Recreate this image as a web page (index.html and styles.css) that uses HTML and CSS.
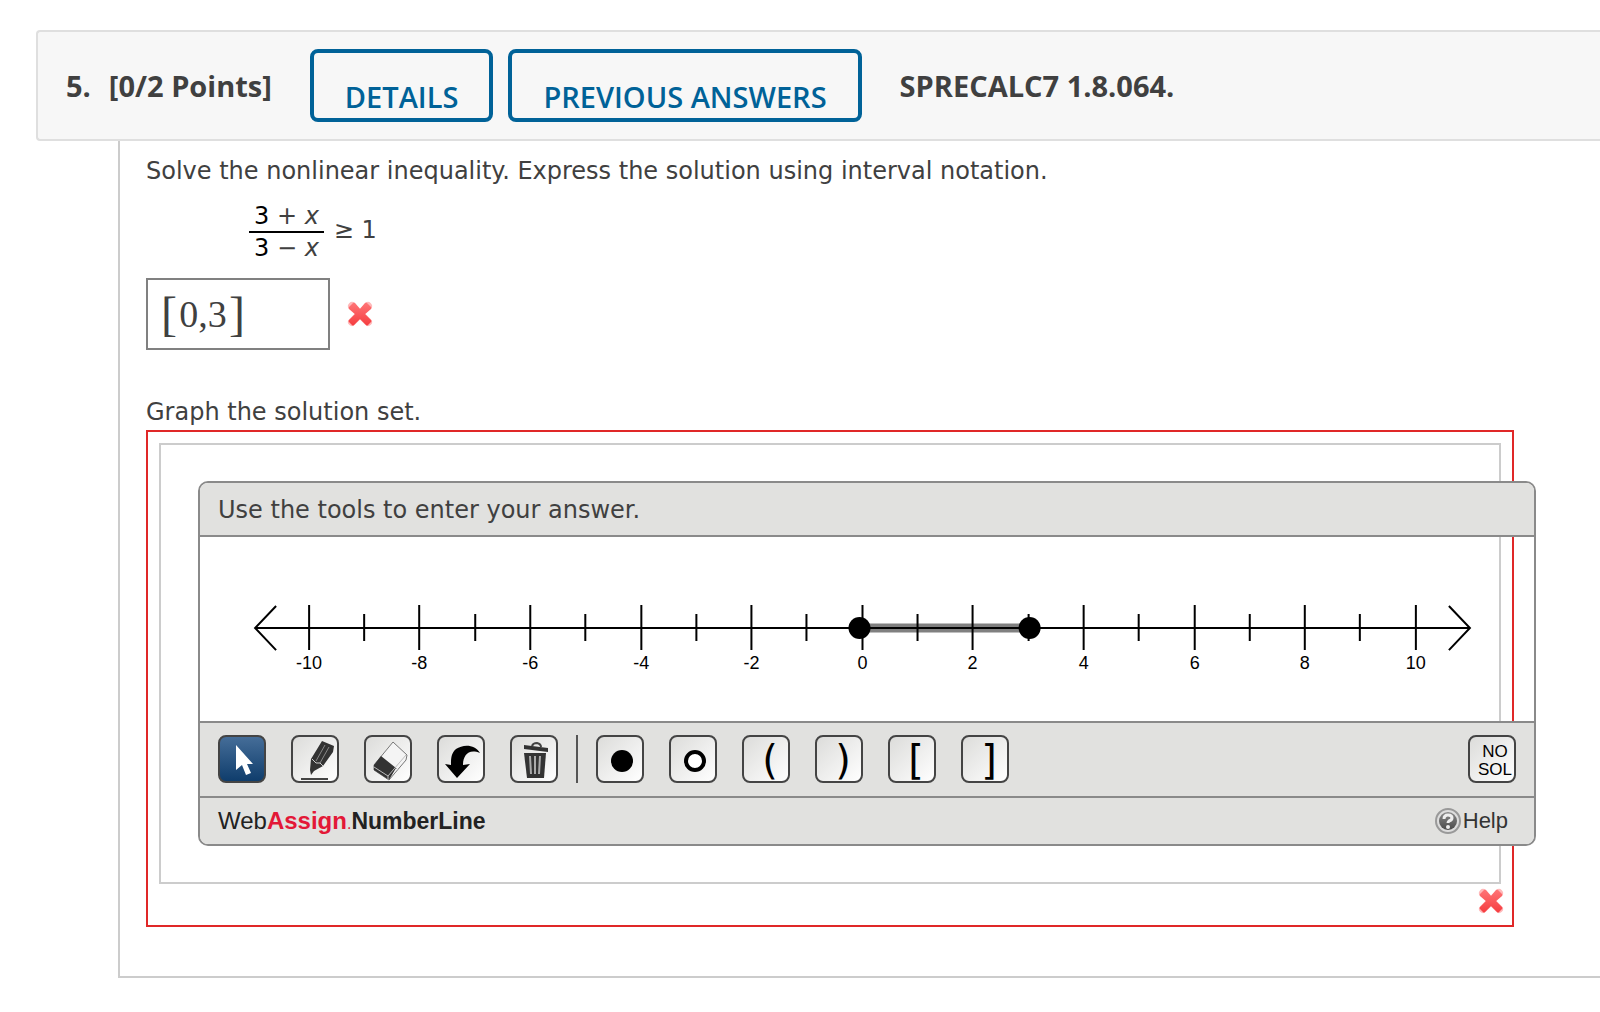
FILE: index.html
```
<!DOCTYPE html>
<html lang="en">
<head>
  <meta charset="UTF-8">
  <title>SPRECALC7 1.8.064.</title>
  <link rel="stylesheet" href="styles.css">
</head>
<body>
  <svg class="defs" width="0" height="0" aria-hidden="true">
    <defs>
      <linearGradient id="redFill" x1="0" y1="0" x2="0" y2="1">
        <stop offset="0" stop-color="#ff7577"/>
        <stop offset="1" stop-color="#f53d40"/>
      </linearGradient>
      <linearGradient id="helpFill" x1="0" y1="0" x2="0" y2="1">
        <stop offset="0" stop-color="#8a8a8a"/>
        <stop offset="1" stop-color="#4a4a4a"/>
      </linearGradient>
      <symbol id="wrong" viewBox="0 0 26 26">
        <path d="M5 5L21 21M21 5L5 21" fill="none" stroke="#ffb9ba" stroke-width="8" stroke-linecap="round"/>
        <path d="M2 6L6 2Q7 1 8 2L13 8L18 2Q19 1 20 2L24 6Q25 7 24 8L18 13L24 19Q25 20 24 21L21 24Q20 25 19 24L13 18L7 24Q6 25 5 24L2 21Q1 20 2 19L8 13L2 8Q1 7 2 6Z" fill="url(#redFill)"/>
      </symbol>
    </defs>
  </svg>

  <header class="question-header">
    <h2 class="points"><span class="number">5.</span>[0/2 Points]</h2>
    <div class="actions">
      <button class="action-btn" type="button">DETAILS</button>
      <button class="action-btn" type="button">PREVIOUS ANSWERS</button>
    </div>
    <strong class="code">SPRECALC7 1.8.064.</strong>
  </header>

  <main class="question">
    <p class="prompt">Solve the nonlinear inequality. Express the solution using interval notation.</p>
    <div class="math">
      <div class="fraction">
        <span class="numerator"><b>3</b> + <i>x</i></span>
        <span class="denominator"><b>3</b> − <i>x</i></span>
      </div>
      <span class="relation">≥ 1</span>
    </div>

    <div class="answer">
      <label class="answer-box">
        <span class="bracket">[</span>
        <input class="answer-input" type="text" value="0,3" size="3" aria-label="Interval">
        <span class="bracket">]</span>
      </label>
      <svg class="mark" role="img" aria-label="Incorrect"><use href="#wrong"/></svg>
    </div>

    <p class="prompt graph-prompt">Graph the solution set.</p>
    <section class="graded">
      <div class="frame">
        <div class="numberline">
          <div class="instructions">Use the tools to enter your answer.</div>

          <div class="graph">
            <svg viewBox="0 0 1333 184" role="img" aria-label="Number line from -10 to 10">
              <path class="segment" d="M660 91H829"/>
              <path class="axis" d="M55 91H1269M76 69L55 91L76 113M1248 69L1269 91L1248 113"/>
              <path class="tick" d="M109 68v45M219 68v45M330 68v45M441 68v45M551 68v45M662 68v45M772 68v45M883 68v45M994 68v45M1104 68v45M1215 68v45"/>
              <path class="tick" d="M164 77v27M275 77v27M385 77v27M496 77v27M606 77v27M717 77v27M828 77v27M938 77v27M1049 77v27M1159 77v27"/>
              <circle cx="659" cy="91" r="11"/>
              <circle cx="829" cy="91" r="11"/>
              <g class="labels">
                <text x="109" y="132">-10</text>
                <text x="219" y="132">-8</text>
                <text x="330" y="132">-6</text>
                <text x="441" y="132">-4</text>
                <text x="551" y="132">-2</text>
                <text x="662" y="132">0</text>
                <text x="772" y="132">2</text>
                <text x="883" y="132">4</text>
                <text x="994" y="132">6</text>
                <text x="1104" y="132">8</text>
                <text x="1215" y="132">10</text>
              </g>
            </svg>
          </div>

          <div class="toolbar">
            <div class="tools">
              <button class="tool selected" type="button" aria-label="Select">
                <svg viewBox="0 0 48 48"><path d="M18 10V35L24 30L28 40L33 38L29 29H35Z" fill="#fff"/></svg>
              </button>
              <button class="tool" type="button" aria-label="Draw">
                <svg viewBox="0 0 48 48">
                  <path d="M31 6L43 11L42 17L32 31L23 36L20 40L19 35L20 24Z" fill="#333"/>
                  <path d="M34 10L25 26M38 12L29 28" stroke="#888" fill="none"/>
                  <path d="M21 24L25 28L29 28L32 31" stroke="#ccc" fill="none"/>
                  <path d="M10 44H37" stroke="#444" stroke-width="2"/>
                </svg>
              </button>
              <button class="tool" type="button" aria-label="Erase">
                <svg viewBox="0 0 48 48">
                  <path d="M29 7L43 20L42 25L25 45L10 35V30Z" fill="#f4f4f4" stroke="#777"/>
                  <path d="M17 21L32 33L25 45L10 35V30Z" fill="#333"/>
                  <path d="M10 32L24 41L42 20" stroke="#bbb" fill="none"/>
                  <path d="M24 41V45M31 32L34 35" stroke="#bbb" fill="none"/>
                </svg>
              </button>
              <button class="tool" type="button" aria-label="Undo">
                <svg viewBox="0 0 48 48"><path d="M43 18C38 9 26 9 19 14C14 18 14 24 14 30L8 29L20 43L33 29L26 30C26 21 31 13 43 18Z"/></svg>
              </button>
              <button class="tool" type="button" aria-label="Clear all">
                <svg viewBox="0 0 48 48">
                  <path d="M22 11Q23 8 27 8Q31 9 31 12" fill="none" stroke="#444" stroke-width="2"/>
                  <path d="M14 10L38 13V17L14 14Z" fill="#333"/>
                  <path d="M14 18H36L34 43H17Z" fill="#333"/>
                  <path d="M20 21L21 39M25 21V39M30 21L29 39" stroke="#aaa" stroke-width="2"/>
                </svg>
              </button>
            </div>
            <div class="separator"></div>
            <div class="tools">
              <button class="tool" type="button" aria-label="Closed point">
                <svg viewBox="0 0 48 48"><circle cx="26" cy="26" r="11"/></svg>
              </button>
              <button class="tool" type="button" aria-label="Open point">
                <svg viewBox="0 0 48 48"><circle cx="26" cy="26" r="9" fill="#fff" stroke="#000" stroke-width="4"/></svg>
              </button>
              <button class="tool symbol" type="button">(</button>
              <button class="tool symbol" type="button">)</button>
              <button class="tool symbol" type="button">[</button>
              <button class="tool symbol" type="button">]</button>
            </div>
            <button class="tool no-sol" type="button">NO<br>SOL</button>
          </div>

          <footer class="credits">
            <span class="brand">Web<b>Assign</b><small>.</small></span>
            <span class="product">NumberLine</span>
            <a class="help" href="#help">
              <svg class="help-icon" viewBox="0 0 26 26" aria-hidden="true">
                <circle cx="13" cy="13" r="12" fill="#ddd" stroke="#999" stroke-width="2"/>
                <circle cx="13" cy="13" r="9" fill="url(#helpFill)"/>
                <path d="M9 11Q9 7 13 7Q17 7 17 10Q17 12 14 13Q13 14 13 15" fill="none" stroke="#eee" stroke-width="3"/>
                <circle cx="13" cy="19" r="2" fill="#eee"/>
              </svg>Help</a>
          </footer>
        </div>
      </div>
      <svg class="mark" role="img" aria-label="Incorrect"><use href="#wrong"/></svg>
    </section>
  </main>
</body>
</html>
```
FILE: styles.css
```
* {
  box-sizing: border-box;
}
body {
  font-family: Verdana, "DejaVu Sans", sans-serif;
  font-size: 24px;
  line-height: 32px;
  margin: 0;
  padding: 30px 0 0 36px;
  background: #fff;
  color: #404040;
  overflow-x: hidden;
}
.defs {
  position: absolute;
}

/* question header */
.question-header {
  display: flex;
  align-items: center;
  padding: 17px 28px;
  background: #f7f7f7;
  border: 2px solid #dfdfdf;
  border-right: none;
  border-radius: 4px 0 0 4px;
  font-family: "Open Sans", sans-serif;
  font-size: 29px;
  white-space: nowrap;
}
.points {
  display: flex;
  gap: 18px;
  margin: 0 38px 0 0;
  font-size: 29px;
  font-weight: 700;
}
.actions {
  display: flex;
  gap: 15px;
  margin-right: 38px;
}
.action-btn {
  height: 73px;
  padding: 22px 31px 0;
  background: transparent;
  border: 4px solid #006298;
  border-radius: 8px;
  color: #006298;
  font-family: inherit;
  font-size: 29px;
  font-weight: 600;
  cursor: pointer;
}
.code {
  font-weight: 700;
}

/* question body */
.question {
  margin-left: 82px;
  padding: 14px 86px 49px 26px;
  border-left: 2px solid #ccc;
  border-bottom: 2px solid #ccc;
}
.prompt {
  margin: 0;
}
.graph-prompt {
  margin: 46px 0 2px;
}
.math {
  display: flex;
  align-items: center;
  gap: 10px;
  margin: 14px 0 15px 103px;
}
.relation {
  padding-bottom: 4px;
}
.fraction {
  display: flex;
  flex-direction: column;
  align-items: center;
  line-height: 30px;
}
.fraction b {
  color: #000;
  font-weight: 400;
}
.numerator,
.denominator {
  padding: 0 5px;
}
.numerator {
  border-bottom: 2px solid #000;
}
.answer {
  display: flex;
  align-items: center;
  gap: 17px;
}
.answer-box {
  display: flex;
  align-items: center;
  width: 184px;
  height: 72px;
  padding-left: 13px;
  border: 2px solid #808080;
  font-family: "Liberation Serif", serif;
}
.answer-input {
  width: 52px;
  padding: 0;
  border: none;
  outline: none;
  background: transparent;
  color: #404040;
  font-family: inherit;
  font-size: 38px;
  text-align: center;
}
.bracket {
  font-size: 48px;
}
.mark {
  display: block;
  width: 26px;
  height: 26px;
}

/* graded graph */
.graded {
  padding: 11px;
  border: 2px solid #e02828;
}
.graded > .mark {
  margin: 4px -3px 0 auto;
}
.frame {
  padding: 36px 0 36px 37px;
  border: 2px solid #ccc;
}
.numberline {
  margin-right: -37px;
  border: 2px solid #8a8a8a;
  border-radius: 10px;
  overflow: hidden;
}
.instructions {
  padding: 11px 18px 9px;
  background: #e1e1df;
  border-bottom: 2px solid #8a8a8a;
}
.graph svg {
  display: block;
  width: 100%;
}
.segment {
  stroke: #808080;
  stroke-width: 9;
}
.axis,
.tick {
  fill: none;
  stroke: #000;
  stroke-width: 2;
}
.labels {
  font-family: "Liberation Sans", Arial, sans-serif;
  font-size: 18px;
  text-anchor: middle;
}

/* toolbar */
.toolbar {
  display: flex;
  align-items: center;
  padding: 12px 18px 13px;
  background: #e1e1df;
  border-top: 2px solid #8a8a8a;
}
.tools {
  display: flex;
  gap: 25px;
}
.tool {
  display: flex;
  align-items: center;
  justify-content: center;
  width: 48px;
  height: 48px;
  padding: 0;
  background: linear-gradient(135deg, #dcdcda, #fff);
  border: 2px solid #444;
  border-radius: 8px;
  color: #000;
  cursor: pointer;
}
.tool svg {
  flex: none;
  width: 48px;
  height: 48px;
}
.tool.selected {
  background: linear-gradient(#456d98, #0f3d6c);
}
.tool.symbol {
  padding: 2px 0 0 8px;
  font-family: Verdana, "DejaVu Sans", sans-serif;
  font-size: 40px;
  line-height: 40px;
}
.separator {
  width: 2px;
  height: 48px;
  margin: 0 18px;
  background: #555;
}
.no-sol {
  margin-left: auto;
  padding: 4px 0 0 6px;
  font-family: "Liberation Sans", Arial, sans-serif;
  font-size: 17px;
  line-height: 18px;
}

.credits {
  display: flex;
  align-items: center;
  padding: 8px 26px 8px 18px;
  background: #e1e1df;
  border-top: 2px solid #8a8a8a;
  color: #222;
  font-family: "Liberation Sans", Arial, sans-serif;
  line-height: 30px;
}
.brand {
  font-size: 24px;
}
.brand b,
.brand small {
  color: #e31837;
}
.brand small {
  font-size: 16px;
  line-height: 1;
}
.product {
  font-size: 23px;
  font-weight: 700;
}
.help {
  display: flex;
  align-items: center;
  gap: 2px;
  margin-left: auto;
  color: #333;
  font-size: 22px;
  text-decoration: none;
}
.help-icon {
  width: 26px;
  height: 26px;
}
```
